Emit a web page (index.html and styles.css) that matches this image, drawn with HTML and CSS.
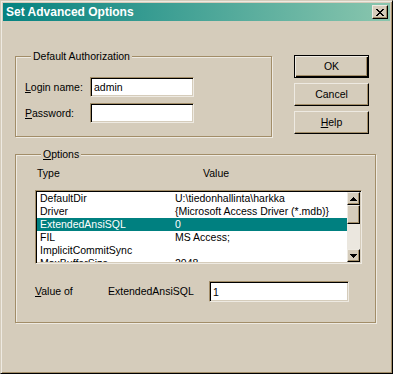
FILE: index.html
```html
<!DOCTYPE html>
<html lang="en">
<head>
    <meta charset="UTF-8">
    <title>Set Advanced Options</title>
    <link rel="stylesheet" href="styles.css">
</head>
<body>
    <div class="window">
        <div class="titlebar">
            <span class="title">Set Advanced Options</span>
            <button class="close-btn">
                <svg width="8" height="7" viewBox="0 0 8 7" shape-rendering="crispEdges">
                    <path d="M0 0h2v1H0zM6 0h2v1H6zM1 1h2v1H1zM5 1h2v1H5zM2 2h4v1H2zM3 3h2v1H3zM2 4h4v1H2zM1 5h2v1H1zM5 5h2v1H5zM0 6h2v1H0zM6 6h2v1H6z" fill="#000"/>
                </svg>
            </button>
        </div>

        <div class="client">
            <div class="top-row">
                <fieldset class="group auth">
                    <legend>Default Authorization</legend>
                    <div class="field">
                        <label><u>L</u>ogin name:</label>
                        <input class="edit" type="text" value="admin">
                    </div>
                    <div class="field">
                        <label><u>P</u>assword:</label>
                        <input class="edit" type="password">
                    </div>
                </fieldset>
                <div class="buttons">
                    <button class="btn default">OK</button>
                    <button class="btn">Cancel</button>
                    <button class="btn"><u>H</u>elp</button>
                </div>
            </div>

            <fieldset class="group options">
                <legend><u>O</u>ptions</legend>
                <div class="col-head">
                    <span class="head-type">Type</span>
                    <span>Value</span>
                </div>
                <div class="listbox">
                    <div class="rows">
                        <div class="row"><span class="type">DefaultDir</span><span>U:\tiedonhallinta\harkka</span></div>
                        <div class="row"><span class="type">Driver</span><span>{Microsoft Access Driver (*.mdb)}</span></div>
                        <div class="row selected"><span class="type">ExtendedAnsiSQL</span><span>0</span></div>
                        <div class="row"><span class="type">FIL</span><span>MS Access;</span></div>
                        <div class="row"><span class="type">ImplicitCommitSync</span><span></span></div>
                        <div class="row"><span class="type">MaxBufferSize</span><span>2048</span></div>
                    </div>
                    <div class="scrollbar">
                        <div class="sb-btn">
                            <svg width="7" height="4" viewBox="0 0 7 4" shape-rendering="crispEdges">
                                <path d="M3 0h1v1h1v1h1v1h1v1H0V3h1V2h1V1h1z" fill="#000"/>
                            </svg>
                        </div>
                        <div class="sb-thumb"></div>
                        <div class="sb-track"></div>
                        <div class="sb-btn">
                            <svg width="7" height="4" viewBox="0 0 7 4" shape-rendering="crispEdges">
                                <path d="M0 0h7v1H6v1H5v1H4v1H3V3H2V2H1V1H0z" fill="#000"/>
                            </svg>
                        </div>
                    </div>
                </div>
                <div class="value-row">
                    <span class="value-label"><u>V</u>alue of</span>
                    <span class="value-key">ExtendedAnsiSQL</span>
                    <input class="edit value-edit" type="text" value="1">
                </div>
            </fieldset>
        </div>
    </div>
</body>
</html>
```

FILE: styles.css
```css
* {
    margin: 0;
    padding: 0;
    box-sizing: border-box;
}

:root {
    --face: #d5ccbb;
    --hi: #eeeae2;
    --shadow: #a28d68;
    --dk: #000;
}

body {
    font-family: "Liberation Sans", Arial, sans-serif;
    font-size: 10.5px;
    line-height: 13px;
    color: #000;
    background: var(--face);
}

.window {
    width: 393px;
    height: 374px;
    background: var(--face);
    border: 1px solid;
    border-color: var(--face) var(--dk) var(--dk) var(--face);
    box-shadow: inset 1px 1px 0 var(--hi), inset -1px -1px 0 var(--shadow);
    padding: 2px;
}

/* title bar */
.titlebar {
    height: 18px;
    display: flex;
    align-items: center;
    justify-content: space-between;
    padding: 0 2px 0 3px;
    background: linear-gradient(to right, #058280, #8ac6ae);
}

.title {
    color: #fff;
    font-weight: bold;
    font-size: 12px;
}

.close-btn {
    width: 16px;
    height: 14px;
    display: flex;
    align-items: center;
    justify-content: center;
    background: var(--face);
    border: 1px solid;
    border-color: var(--hi) var(--dk) var(--dk) var(--hi);
    box-shadow: inset -1px -1px 0 var(--shadow);
}

/* group boxes */
.group {
    border: 1px solid var(--shadow);
    box-shadow: inset 1px 1px 0 var(--hi), 1px 1px 0 var(--hi);
    min-width: 0;
}

.group legend {
    padding: 0 2px;
    margin-left: 6px;
    line-height: 13px;
    background: var(--face);
}

.top-row {
    display: flex;
    align-items: flex-start;
    margin-top: 29px;
    padding-left: 12px;
}

.auth {
    width: 257px;
    padding: 14px 0 13px 9px;
    display: flex;
    flex-direction: column;
    gap: 6px;
}

.field {
    display: flex;
    align-items: center;
    height: 20px;
}

.field label {
    width: 65px;
}

.edit {
    font: inherit;
    color: #000;
    width: 104px;
    height: 20px;
    padding: 0 3px;
    background: #fff;
    border: 1px solid;
    border-color: var(--shadow) var(--hi) var(--hi) var(--shadow);
    box-shadow: inset 1px 1px 0 var(--dk), inset -1px -1px 0 var(--face);
    outline: none;
}

/* buttons */
.buttons {
    display: flex;
    flex-direction: column;
    gap: 5px;
    margin: 5px 0 0 22px;
}

.btn {
    font: inherit;
    color: #000;
    width: 75px;
    height: 23px;
    background: var(--face);
    border: 1px solid;
    border-color: var(--hi) var(--dk) var(--dk) var(--hi);
    box-shadow: inset -1px -1px 0 var(--shadow);
}

.btn.default {
    border-color: var(--dk);
    box-shadow: inset 1px 1px 0 var(--hi), inset -1px -1px 0 var(--dk), inset -2px -2px 0 var(--shadow);
}

/* options */
.options {
    width: 361px;
    margin: 11px 0 0 12px;
    padding: 6px 0 20px 19px;
}

.col-head {
    display: flex;
    height: 13px;
    padding-left: 2px;
}

.head-type {
    width: 166px;
}

.listbox {
    width: 327px;
    height: 74px;
    margin-top: 10px;
    display: flex;
    background: #fff;
    border: 1px solid;
    border-color: var(--shadow) var(--hi) var(--hi) var(--shadow);
    box-shadow: inset 1px 1px 0 var(--dk), inset -1px -1px 0 var(--face);
    padding: 1px;
}

.rows {
    flex: 1;
    overflow: hidden;
}

.row {
    display: flex;
    height: 13px;
    padding-left: 3px;
    white-space: nowrap;
}

.row .type {
    width: 135px;
}

.row.selected {
    background: #008080;
    color: #fff;
}

.scrollbar {
    width: 13px;
    display: flex;
    flex-direction: column;
    background: #ebe7df;
}

.sb-btn, .sb-thumb {
    background: var(--face);
    border: 1px solid;
    border-color: var(--hi) var(--dk) var(--dk) var(--hi);
    box-shadow: inset -1px -1px 0 var(--shadow);
}

.sb-btn {
    height: 13px;
    display: flex;
    align-items: center;
    justify-content: center;
}

.sb-thumb {
    height: 19px;
}

.sb-track {
    flex: 1;
}

.value-row {
    display: flex;
    align-items: center;
    height: 21px;
    margin-top: 17px;
}

.value-label {
    width: 73px;
}

.value-key {
    width: 101px;
}

.value-edit {
    width: 140px;
    height: 21px;
}
```
